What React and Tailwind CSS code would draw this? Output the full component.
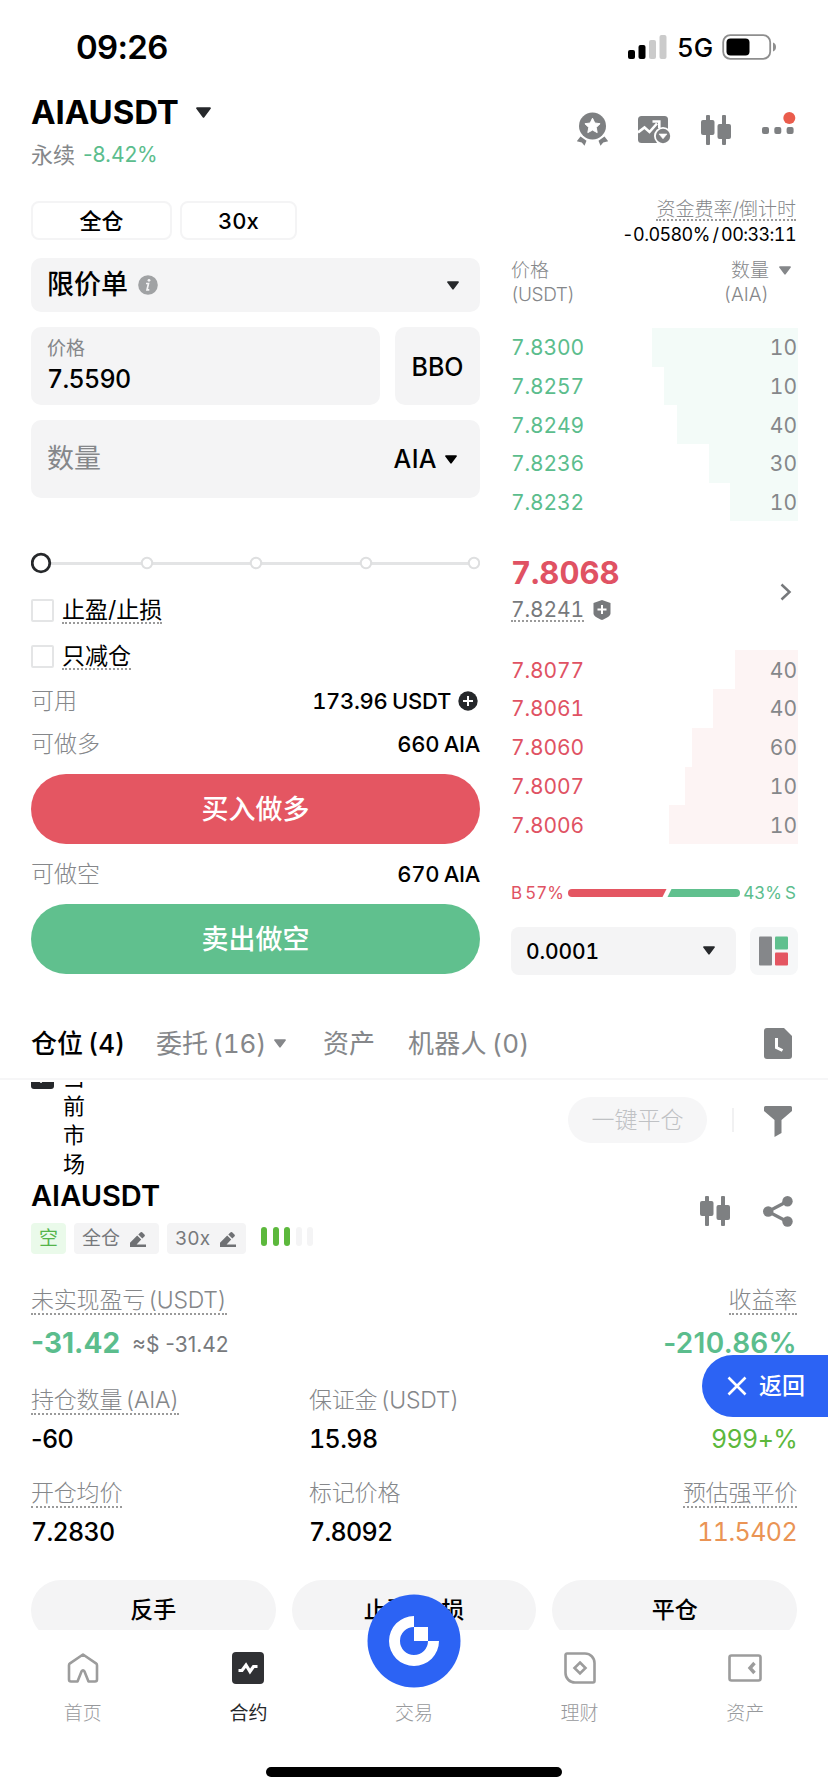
import React from "react";
import clsx from "clsx";

const bids = [
  { price: "7.8300", qty: 10, depth: 146 },
  { price: "7.8257", qty: 10, depth: 134 },
  { price: "7.8249", qty: 40, depth: 121 },
  { price: "7.8236", qty: 30, depth: 89 },
  { price: "7.8232", qty: 10, depth: 68 },
];

const asks = [
  { price: "7.8077", qty: 40, depth: 63 },
  { price: "7.8061", qty: 40, depth: 85 },
  { price: "7.8060", qty: 60, depth: 106 },
  { price: "7.8007", qty: 10, depth: 113 },
  { price: "7.8006", qty: 10, depth: 129 },
];

function Caret({ className }) {
  return (
    <svg viewBox="0 0 14 10" className={clsx("shrink-0", className)} fill="currentColor">
      <path d="M1 0h12a1 1 0 0 1 .7 1.6L7.8 9.4a1 1 0 0 1-1.6 0L.3 1.6A1 1 0 0 1 1 0z" />
    </svg>
  );
}

function CandlesIcon() {
  return (
    <svg width="30" height="30" viewBox="0 0 30 30" fill="#7e8082">
      <rect x="5" y="0" width="4" height="30" rx="1" />
      <rect x="0" y="5" width="13.5" height="15" rx="2" />
      <rect x="21" y="0" width="4" height="30" rx="1" />
      <rect x="16.5" y="9" width="13.5" height="15" rx="2" />
    </svg>
  );
}

function EditIcon() {
  return (
    <svg width="16" height="15" viewBox="0 0 16 15" fill="#6f7174">
      <path d="M0 15v-4.2L7.2 3.6l4 4L6.6 12.4H16V15z" />
      <path d="M8.3 2.6 10.4.5a1.4 1.4 0 0 1 2 0l2 2a1.4 1.4 0 0 1 0 2l-2.1 2.1z" />
    </svg>
  );
}

function StatusBar() {
  return (
    <div className="flex h-[92px] items-start justify-between pt-[34px] pr-[51px] pl-[76px]">
      <span className="text-[33px] leading-[27px] font-semibold tracking-[-0.7px] proportional-nums">09:26</span>
      <div className="flex h-[26px] items-center">
        <svg width="39" height="26" viewBox="0 0 39 26">
          <rect x="0" y="16" width="7" height="9" rx="2" />
          <rect x="10.5" y="11" width="7" height="14" rx="2" />
          <rect x="21" y="6" width="7" height="19" rx="2" fill="#cbcbcb" />
          <rect x="31.5" y="1" width="7" height="24" rx="2" fill="#cbcbcb" />
        </svg>
        <span className="ml-2.5 w-[37px] pt-0.5 text-[26px] leading-[26px] font-medium">5G</span>
        <svg width="55" height="26" viewBox="0 0 55 26" className="ml-2">
          <rect x="1.2" y="1.2" width="47" height="23.6" rx="7" fill="none" stroke="#8e8e8e" strokeWidth="1.8" />
          <rect x="4.5" y="4.5" width="23" height="17" rx="4" />
          <path d="M51 8.5c2.2.8 3 2.4 3 4.5s-.8 3.7-3 4.5z" fill="#8e8e8e" />
        </svg>
      </div>
    </div>
  );
}

function Header() {
  return (
    <div className="flex h-[109px] justify-between pr-[32px] pl-[31px]">
      <div>
        <div className="flex h-10 items-center">
          <h1 className="text-[33px] leading-10 font-bold tracking-[-0.1px]">AIAUSDT</h1>
          <Caret className="ml-[17px] h-[11px] w-[15px] text-[#26282b]" />
        </div>
        <div className="mt-[9px] flex h-[28px] items-center gap-2 text-[22px] leading-[28px] text-[#85878a]">
          <span>永续</span>
          <span className="text-[21px] tracking-[-0.1px] text-[#5bbd8d] proportional-nums">-8.42%</span>
        </div>
      </div>
      <div className="flex items-start pt-[18px]">
        <svg width="33" height="36" viewBox="0 0 33 36" fill="#7e8082">
          <circle cx="16.5" cy="16" r="13.5" />
          <path d="M16.5 8.2l2.3 4.8 5.3.7-3.9 3.7 1 5.2-4.7-2.5-4.7 2.5 1-5.2-3.9-3.7 5.3-.7z" fill="#fff" stroke="#fff" strokeWidth="1" strokeLinejoin="round" />
          <path d="M4.5 26.5l6 4.3-2 5-2.7-3.3-5-1.2zM28.5 26.5l-6 4.3 2 5 2.7-3.3 5-1.2z" />
        </svg>
        <svg width="33" height="28" viewBox="0 0 33 28" className="mt-[6px] ml-[29px]">
          <rect x="0" y="0" width="30" height="27" rx="3.5" fill="#7e8082" />
          <path d="M0 16.5l6.5-5 5 4.5 7.5-8.5" fill="none" stroke="#fff" strokeWidth="2.6" />
          <path d="M14.5 5.5h6.8v6.8" fill="none" stroke="#fff" strokeWidth="2.6" />
          <circle cx="25" cy="20" r="9" fill="#fff" />
          <circle cx="25" cy="20" r="7.2" fill="#7e8082" />
          <path d="M21 18h8l-4 4.8z" fill="#fff" stroke="#fff" strokeWidth=".6" strokeLinejoin="round" />
        </svg>
        <div className="mt-[5px] ml-[30px]">
          <CandlesIcon />
        </div>
        <svg width="34" height="26" viewBox="0 0 34 26" className="mt-[1px] ml-[31px]">
          <rect x="0" y="16" width="7" height="7" rx="2" fill="#7e8082" />
          <rect x="12.3" y="16" width="7" height="7" rx="2" fill="#7e8082" />
          <rect x="24.6" y="16" width="7" height="7" rx="2" fill="#7e8082" />
          <circle cx="27.3" cy="7" r="6" fill="#ea5c4c" />
        </svg>
      </div>
    </div>
  );
}

function CheckRow({ label, className }) {
  return (
    <div className={clsx("flex h-[27px] items-center", className)}>
      <div className="h-[23px] w-[23px] rounded-[2px] border-2 border-[#e4e5e6]" />
      <span className="ml-2 h-[27px] border-b-2 border-dotted border-[#9a9a9a] text-[23px] leading-[27px]">{label}</span>
    </div>
  );
}

function BalanceRow({ label, value, className, children }) {
  return (
    <div className={clsx("flex h-7 items-center justify-between", className)}>
      <span className="text-[23px] leading-7 font-light text-[#85878a]">{label}</span>
      <div className="flex items-center">
        <span className="text-[22px] leading-7 font-medium tracking-[-0.3px] [word-spacing:-1px]">{value}</span>
        {children}
      </div>
    </div>
  );
}

function OrderForm() {
  return (
    <div className="flex w-[449px] flex-col">
      <div className="flex gap-2 text-[22px] font-medium">
        <div className="flex h-[39px] w-[141px] items-center justify-center rounded-lg border-2 border-[#f4f4f5] pt-0.5">全仓</div>
        <div className="flex h-[39px] w-[117px] items-center justify-center rounded-lg border-2 border-[#f4f4f5] pt-0.5">30x</div>
      </div>

      <div className="mt-[18px] flex h-[54px] items-center rounded-[10px] bg-[#f4f4f5] pr-[21px] pl-4">
        <span className="text-[27px] leading-[54px] font-medium">限价单</span>
        <svg width="20" height="20" viewBox="0 0 20 20" className="ml-2.5">
          <circle cx="10" cy="10" r="9.8" fill="#a0a2a4" />
          <path d="M8 8.5h2.5L9 14.8h2.3" fill="none" stroke="#f4f4f5" strokeWidth="1.7" />
          <circle cx="11" cy="5.3" r="1.4" fill="#f4f4f5" />
        </svg>
        <Caret className="ml-auto h-[9px] w-3 text-[#26282b]" />
      </div>

      <div className="mt-[15px] flex gap-[15px]">
        <div className="h-[78px] flex-1 rounded-[10px] bg-[#f4f4f5] pt-2 pl-4">
          <div className="text-[19px] leading-[28px] text-[#85878a]">价格</div>
          <div className="text-[25px] leading-[33px] font-medium tracking-[-0.7px]">7.5590</div>
        </div>
        <div className="flex h-[78px] w-[85px] items-center justify-center rounded-[10px] bg-[#f4f4f5] pt-1 text-[25px] font-medium">BBO</div>
      </div>

      <div className="mt-[15px] flex h-[78px] items-center rounded-[10px] bg-[#f4f4f5] pr-[23px] pl-4">
        <span className="text-[27px] leading-[78px] text-[#85878a]">数量</span>
        <span className="ml-auto pt-0.5 text-[25px] font-medium tracking-[0.4px]">AIA</span>
        <Caret className="ml-2 h-[9px] w-3" />
      </div>

      <svg width="449" height="22" viewBox="0 0 449 22" className="mt-[54px]" fill="#fff">
        <path d="M10 11.5h433" stroke="#e3e4e5" strokeWidth="3" />
        <circle cx="10" cy="11" r="8.8" stroke="#26282b" strokeWidth="2.8" />
        {[116, 225, 335, 443].map((cx) => (
          <circle key={cx} cx={cx} cy="11" r="5.2" stroke="#dedfe0" strokeWidth="2" />
        ))}
      </svg>

      <CheckRow label="止盈/止损" className="mt-[23px]" />
      <CheckRow label="只减仓" className="mt-[19px]" />

      <BalanceRow label="可用" value="173.96 USDT" className="mt-[17px]">
        <svg width="20" height="20" viewBox="0 0 20 20" className="mr-0.5 ml-[7px]">
          <circle cx="10" cy="10" r="9.7" fill="#26282b" />
          <path d="M10 5v10M5 10h10" stroke="#fff" strokeWidth="2" />
        </svg>
      </BalanceRow>
      <BalanceRow label="可做多" value="660 AIA" className="mt-[15px]" />
      <button className="mt-4 h-[70px] rounded-full bg-[#e45662] pt-0.5 text-[27px] font-medium text-white">买入做多</button>
      <BalanceRow label="可做空" value="670 AIA" className="mt-4" />
      <button className="mt-4 h-[70px] rounded-full bg-[#60c08e] pt-0.5 text-[27px] font-medium text-white">卖出做空</button>
    </div>
  );
}

function BookRows({ rows, side }) {
  return (
    <div>
      {rows.map((row) => (
        <div key={row.price} className="flex h-[38.7px] items-center justify-between text-[21px]">
          <span className={clsx("pt-[1.5px] tracking-[-0.1px]", side === "bid" ? "text-[#5bbd8d]" : "text-[#e05263]")}>
            {row.price}
          </span>
          <div
            className={clsx(
              "flex h-full items-center justify-end pt-[1.5px] pr-px text-[#85878a]",
              side === "bid" ? "bg-[#f3fbf8]" : "bg-[#fdf4f4]"
            )}
            style={{ width: row.depth }}
          >
            {row.qty}
          </div>
        </div>
      ))}
    </div>
  );
}

function OrderBook() {
  return (
    <div className="-mt-[4px] flex w-[287px] flex-col">
      <div className="flex flex-col items-end pr-0.5">
        <span className="h-6 border-b-2 border-dotted border-[#9a9a9a] text-[19px] leading-[25px] font-light text-[#85878a]">资金费率/倒计时</span>
        <span className="mt-[3px] text-[18px] leading-[22px] tracking-[-0.6px] [word-spacing:-1.5px]">-0.0580% / 00:33:11</span>
      </div>

      <div className="mt-[13px] flex justify-between text-[19px] leading-[24px] font-light text-[#85878a]">
        <div>
          <div>价格</div>
          <div className="tracking-[-0.4px]">(USDT)</div>
        </div>
        <div className="flex pr-[7px]">
          <div className="text-right">
            <div>数量</div>
            <div>(AIA)</div>
          </div>
          <Caret className="mt-[7px] ml-2.5 h-[9px] w-3" />
        </div>
      </div>

      <div className="mt-[21px]">
        <BookRows rows={bids} side="bid" />
      </div>

      <div className="mt-[34px] flex items-center justify-between">
        <div>
          <div className="text-[31px] leading-9 font-bold text-[#e05263]">7.8068</div>
          <div className="mt-[7px] flex items-center">
            <span className="h-6 border-b-2 border-dotted border-[#9a9a9a] text-[21px] leading-[23px] tracking-[-0.1px] text-[#77797c]">7.8241</span>
            <svg width="18" height="20" viewBox="0 0 18 20" className="ml-[9px]">
              <path d="M9 0l8.500 3v10.500c0 3-5 5-8.500 6.500-3.500-1.500-8.500-3.500-8.500-6.500V3z" fill="#77797c" />
              <path d="M9 5v9M4.500 9.500h9" stroke="#fff" strokeWidth="2" />
            </svg>
          </div>
        </div>
        <svg width="12" height="18" viewBox="0 0 12 18" className="mt-[7px] mr-[6px]" fill="none" stroke="#77797c" strokeWidth="2.500">
          <path d="M1.500 1.500L9.500 9l-8 7.500" />
        </svg>
      </div>

      <div className="mt-[28px]">
        <BookRows rows={asks} side="ask" />
      </div>

      <div className="mt-[39px] flex h-5 items-center justify-between pr-0.5">
        <span className="pt-px text-[17px] [word-spacing:-1.5px] text-[#e05263]">B 57%</span>
        <svg width="172" height="8" viewBox="0 0 172 8">
          <path d="M4 0h94.500l-4 8H4a4 4 0 0 1 0-8z" fill="#e45662" />
          <path d="M103.500 0H168a4 4 0 0 1 0 8h-68.500z" fill="#60c08e" />
        </svg>
        <span className="pt-px text-[17px] [word-spacing:-1.5px] text-[#5bbd8d]">43% S</span>
      </div>

      <div className="mt-6 flex justify-between">
        <div className="flex h-12 w-[225px] items-center justify-between rounded-lg bg-[#f4f4f5] pr-[21px] pl-[15px]">
          <span className="pt-0.5 text-[21px] font-medium tracking-[-0.1px]">0.0001</span>
          <Caret className="h-[9px] w-3 text-[#26282b]" />
        </div>
        <div className="flex h-12 w-12 items-center justify-center rounded-lg bg-[#f6f7f8]">
          <svg width="30" height="30" viewBox="0 0 30 30">
            <rect x="0" y="0.5" width="13" height="29" rx="1" fill="#85878a" />
            <rect x="16" y="0.5" width="13" height="13" rx="1" fill="#60c08e" />
            <rect x="16" y="16.5" width="13" height="13" rx="1" fill="#e45662" />
          </svg>
        </div>
      </div>
    </div>
  );
}

function Tabs() {
  return (
    <div className="flex h-[72px] items-center border-b-2 border-[#f6f6f7] pr-[36px] pl-[31px] text-[26px] font-medium text-[#85878a] [word-spacing:-2px]">
      <span className="w-[125px] text-black">仓位 (4)</span>
      <div className="flex w-[167px] items-center">
        <span className="font-normal tracking-[-0.1px]">委托 (16)</span>
        <Caret className="ml-2 h-[9px] w-3" />
      </div>
      <span className="w-[85px] font-normal">资产</span>
      <span className="font-normal tracking-[0.2px]">机器人 (0)</span>
      <svg width="28" height="31" viewBox="0 0 28 31" className="ml-auto">
        <path d="M3 0h17l8 8v20a3 3 0 0 1-3 3H3a3 3 0 0 1-3-3V3a3 3 0 0 1 3-3z" fill="#7e8082" />
        <path d="M12.500 10v9.500l6 3" fill="none" stroke="#fff" strokeWidth="3" />
      </svg>
    </div>
  );
}

function Label({ children, dotted = true }) {
  return (
    <span
      className={clsx(
        "inline-block h-[29px] text-[23px] leading-[29px] font-light tracking-[-0.2px] whitespace-nowrap text-[#85878a] [word-spacing:-3px]",
        dotted && "border-b-2 border-dotted border-[#9a9a9a]"
      )}
    >
      {children}
    </span>
  );
}

function Position() {
  return (
    <div className="px-[31px]">
      <div className="h-[45px]">
        <div className="text-[29px] leading-9 font-semibold">AIAUSDT</div>
      </div>

      <div className="flex h-[31px] items-stretch text-[19px] text-[#77797c]">
        <div className="flex w-[35px] items-center justify-center rounded-[4px] bg-[#eafaea] pt-0.5 text-[#55b44a]">空</div>
        <div className="ml-2 flex w-[85px] items-center gap-2.5 rounded-[4px] bg-[#f4f4f5] pt-0.5 pl-2">
          全仓
          <EditIcon />
        </div>
        <div className="ml-2 flex w-[79px] items-center gap-2.5 rounded-[4px] bg-[#f4f4f5] pt-0.5 pl-2">
          30x
          <EditIcon />
        </div>
        <div className="ml-[15px] flex gap-[5.5px] pt-1">
          <div className="h-[19px] w-1.5 rounded-full bg-[#5cb83c]" />
          <div className="h-[19px] w-1.5 rounded-full bg-[#5cb83c]" />
          <div className="h-[19px] w-1.5 rounded-full bg-[#5cb83c]" />
          <div className="h-[19px] w-1.5 rounded-full bg-[#f4f4f5]" />
          <div className="h-[19px] w-1.5 rounded-full bg-[#f4f4f5]" />
        </div>
        <div className="-mt-[27px] ml-auto flex items-start gap-[33px] pr-1">
          <CandlesIcon />
          <svg width="30" height="31" viewBox="0 0 30 31" fill="#7e8082">
            <path d="M25 5L5 15.500 25 26" fill="none" stroke="#7e8082" strokeWidth="3.2" />
            <circle cx="24.5" cy="5.2" r="5.2" />
            <circle cx="5.2" cy="15.5" r="5.2" />
            <circle cx="24.5" cy="25.5" r="5.2" />
          </svg>
        </div>
      </div>

      <div className="mt-[32px] flex justify-between">
        <Label>未实现盈亏 (USDT)</Label>
        <Label>收益率</Label>
      </div>
      <div className="mt-3 flex h-8 items-center text-[#5bbd8d]">
        <span className="text-[28px] font-bold proportional-nums">-31.42</span>
        <span className="mt-1 ml-3 text-[21px] text-[#77797c] proportional-nums">≈$ -31.42</span>
        <span className="ml-auto text-[28px] font-semibold tracking-[0.3px] proportional-nums">-210.86%</span>
      </div>

      <div className="mt-6 grid grid-cols-[278px_1fr_auto] text-[25px] leading-8 font-medium">
        <div>
          <Label>持仓数量 (AIA)</Label>
          <div className="mt-[8px] tracking-[-0.4px] proportional-nums">-60</div>
        </div>
        <div>
          <Label dotted={false}>保证金 (USDT)</Label>
          <div className="mt-[8px] tracking-[-0.6px]">15.98</div>
        </div>
        <div className="self-end text-right font-normal tracking-[-0.7px] text-[#5cb83c]">999+%</div>
      </div>
      <div className="mt-[21px] grid grid-cols-[278px_1fr_auto] text-[25px] leading-8 font-medium">
        <div>
          <Label>开仓均价</Label>
          <div className="mt-[8px] tracking-[-0.7px]">7.2830</div>
        </div>
        <div>
          <Label dotted={false}>标记价格</Label>
          <div className="mt-[8px] tracking-[-0.7px]">7.8092</div>
        </div>
        <div className="text-right">
          <Label>预估强平价</Label>
          <div className="mt-[8px] font-normal tracking-[-0.6px] text-[#ea9455]">11.5402</div>
        </div>
      </div>

      <div className="mt-[32px] grid grid-cols-3 gap-4 text-[23px] font-medium">
        <button className="h-[60px] rounded-full bg-[#f4f4f5]">反手</button>
        <button className="h-[60px] rounded-full bg-[#f4f4f5]">止盈/止损</button>
        <button className="h-[60px] rounded-full bg-[#f4f4f5]">平仓</button>
      </div>
    </div>
  );
}

function PositionList() {
  return (
    <div className="mt-[1.5px] h-[548.5px] overflow-hidden">
      {/* The filter row is scrolled half under the tabs */}
      <div className="flex h-[96.5px] items-end pr-[36px] pl-[31px]">
        <div className="mb-[89px] flex h-[23px] w-[23px] items-center justify-center rounded-[3px] bg-[#26282b]">
          <svg width="15" height="12" viewBox="0 0 15 12" fill="none" stroke="#fff" strokeWidth="2.500" className="-mt-px">
            <path d="M1 5.500l5 5L14 1" />
          </svg>
        </div>
        <span className="-mb-px ml-[9px] w-[23px] text-[22px] leading-[29px]">当前市场</span>
        <button className="mb-[35px] ml-auto h-[46px] w-[139px] rounded-full bg-[#f6f6f7] text-[23px] font-light text-[#bfc1c4]">一键平仓</button>
        <div className="mb-[46px] ml-[25px] h-6 w-0.5 bg-[#f1f1f2]" />
        <svg width="28" height="31" viewBox="0 0 28 31" fill="#7e8082" className="mb-[41px] ml-[30px]">
          <path d="M1.500 0h25A1.500 1.500 0 0 1 28 1.500V5l-10.500 9v13L10.500 31V14L0 5V1.500A1.500 1.500 0 0 1 1.500 0z" />
        </svg>
      </div>
      <Position />
    </div>
  );
}

const navItems = [
  {
    label: "首页",
    icon: (
      <svg width="32" height="32" viewBox="0 0 32 32" fill="none" stroke="#9c9c9c" strokeWidth="2.600" strokeLinejoin="round">
        <path d="M16 2.500l13 8.800a2.500 2.500 0 0 1 1 2v14.200a2 2 0 0 1-2 2H21.500l-4-10q-1.500-2.500-3 0l-4 10H4a2 2 0 0 1-2-2V13.300a2.500 2.500 0 0 1 1-2z" />
      </svg>
    ),
  },
  {
    label: "合约",
    active: true,
    icon: (
      <svg width="32" height="32" viewBox="0 0 32 32">
        <rect width="32" height="32" rx="4" fill="#303134" />
        <path d="M6.500 18.500H10L14 13l4 6.500 3.500-5h4" fill="none" stroke="#fff" strokeWidth="3.200" />
      </svg>
    ),
  },
  { label: "交易", icon: null },
  {
    label: "理财",
    icon: (
      <svg width="32" height="32" viewBox="0 0 32 32" fill="none" stroke="#9c9c9c" strokeWidth="2.600">
        <path d="M3 1.500h18a9.500 9.500 0 0 1 9.500 9.500v18a1.500 1.500 0 0 1-1.500 1.500H11A9.500 9.500 0 0 1 1.500 21V3A1.500 1.500 0 0 1 3 1.500z" />
        <path d="M16 10.500l5.500 5.500-5.500 5.500-5.500-5.500z" />
      </svg>
    ),
  },
  {
    label: "资产",
    icon: (
      <svg width="34" height="28" viewBox="0 0 34 28" fill="none" stroke="#9c9c9c" strokeWidth="2.600">
        <rect x="1.5" y="1.5" width="31" height="25" rx="2" />
        <path d="M26.500 9L22 14l4.500 5" strokeWidth="3.400" />
      </svg>
    ),
  },
];

function BottomNav() {
  return (
    <div className="relative flex h-[162px] flex-col items-center bg-white">
      <div className="grid w-full grid-cols-5 pt-[22px]">
        {navItems.map((item) => (
          <div key={item.label} className="flex flex-col items-center">
            <div className="flex h-8 items-center">{item.icon}</div>
            <span
              className={clsx(
                "mt-[17px] text-[19px] leading-[26px]",
                item.active ? "text-[#26282b]" : "font-light text-[#97999c]"
              )}
            >
              {item.label}
            </span>
          </div>
        ))}
      </div>
      <div className="mt-10 h-[10px] w-[296px] rounded-full bg-black" />

      <svg width="94" height="94" viewBox="-47 -47 94 94" className="absolute -top-9 left-[367px]">
        <circle r="46.5" fill="#2c63f4" />
        <path d="M0-25A25 25 0 1 0 25 0H14A14 14 0 1 1 0-14z" fill="#fff" />
        <path d="M0-14h14V0H0z" fill="#fff" />
      </svg>
    </div>
  );
}

export default function App() {
  return (
    <div className="relative flex h-[1792px] w-[828px] flex-col overflow-hidden bg-white font-['Inter','Noto_Sans_CJK_SC',sans-serif] text-black tabular-nums">
      <StatusBar />
      <Header />
      <div className="flex h-[807px] gap-[31px] pl-[31px]">
        <OrderForm />
        <OrderBook />
      </div>
      <Tabs />
      <PositionList />
      <BottomNav />

      <div className="absolute top-[1355px] right-0 flex h-[62px] w-[126px] items-center rounded-l-full bg-[#2c63f4] pl-[25px] text-[23px] font-medium text-white">
        <svg width="20" height="20" viewBox="0 0 20 20" fill="none" stroke="#fff" strokeWidth="2.600">
          <path d="M1.500 1.500l17 17M18.500 1.500l-17 17" />
        </svg>
        <span className="ml-3">返回</span>
      </div>
    </div>
  );
}
